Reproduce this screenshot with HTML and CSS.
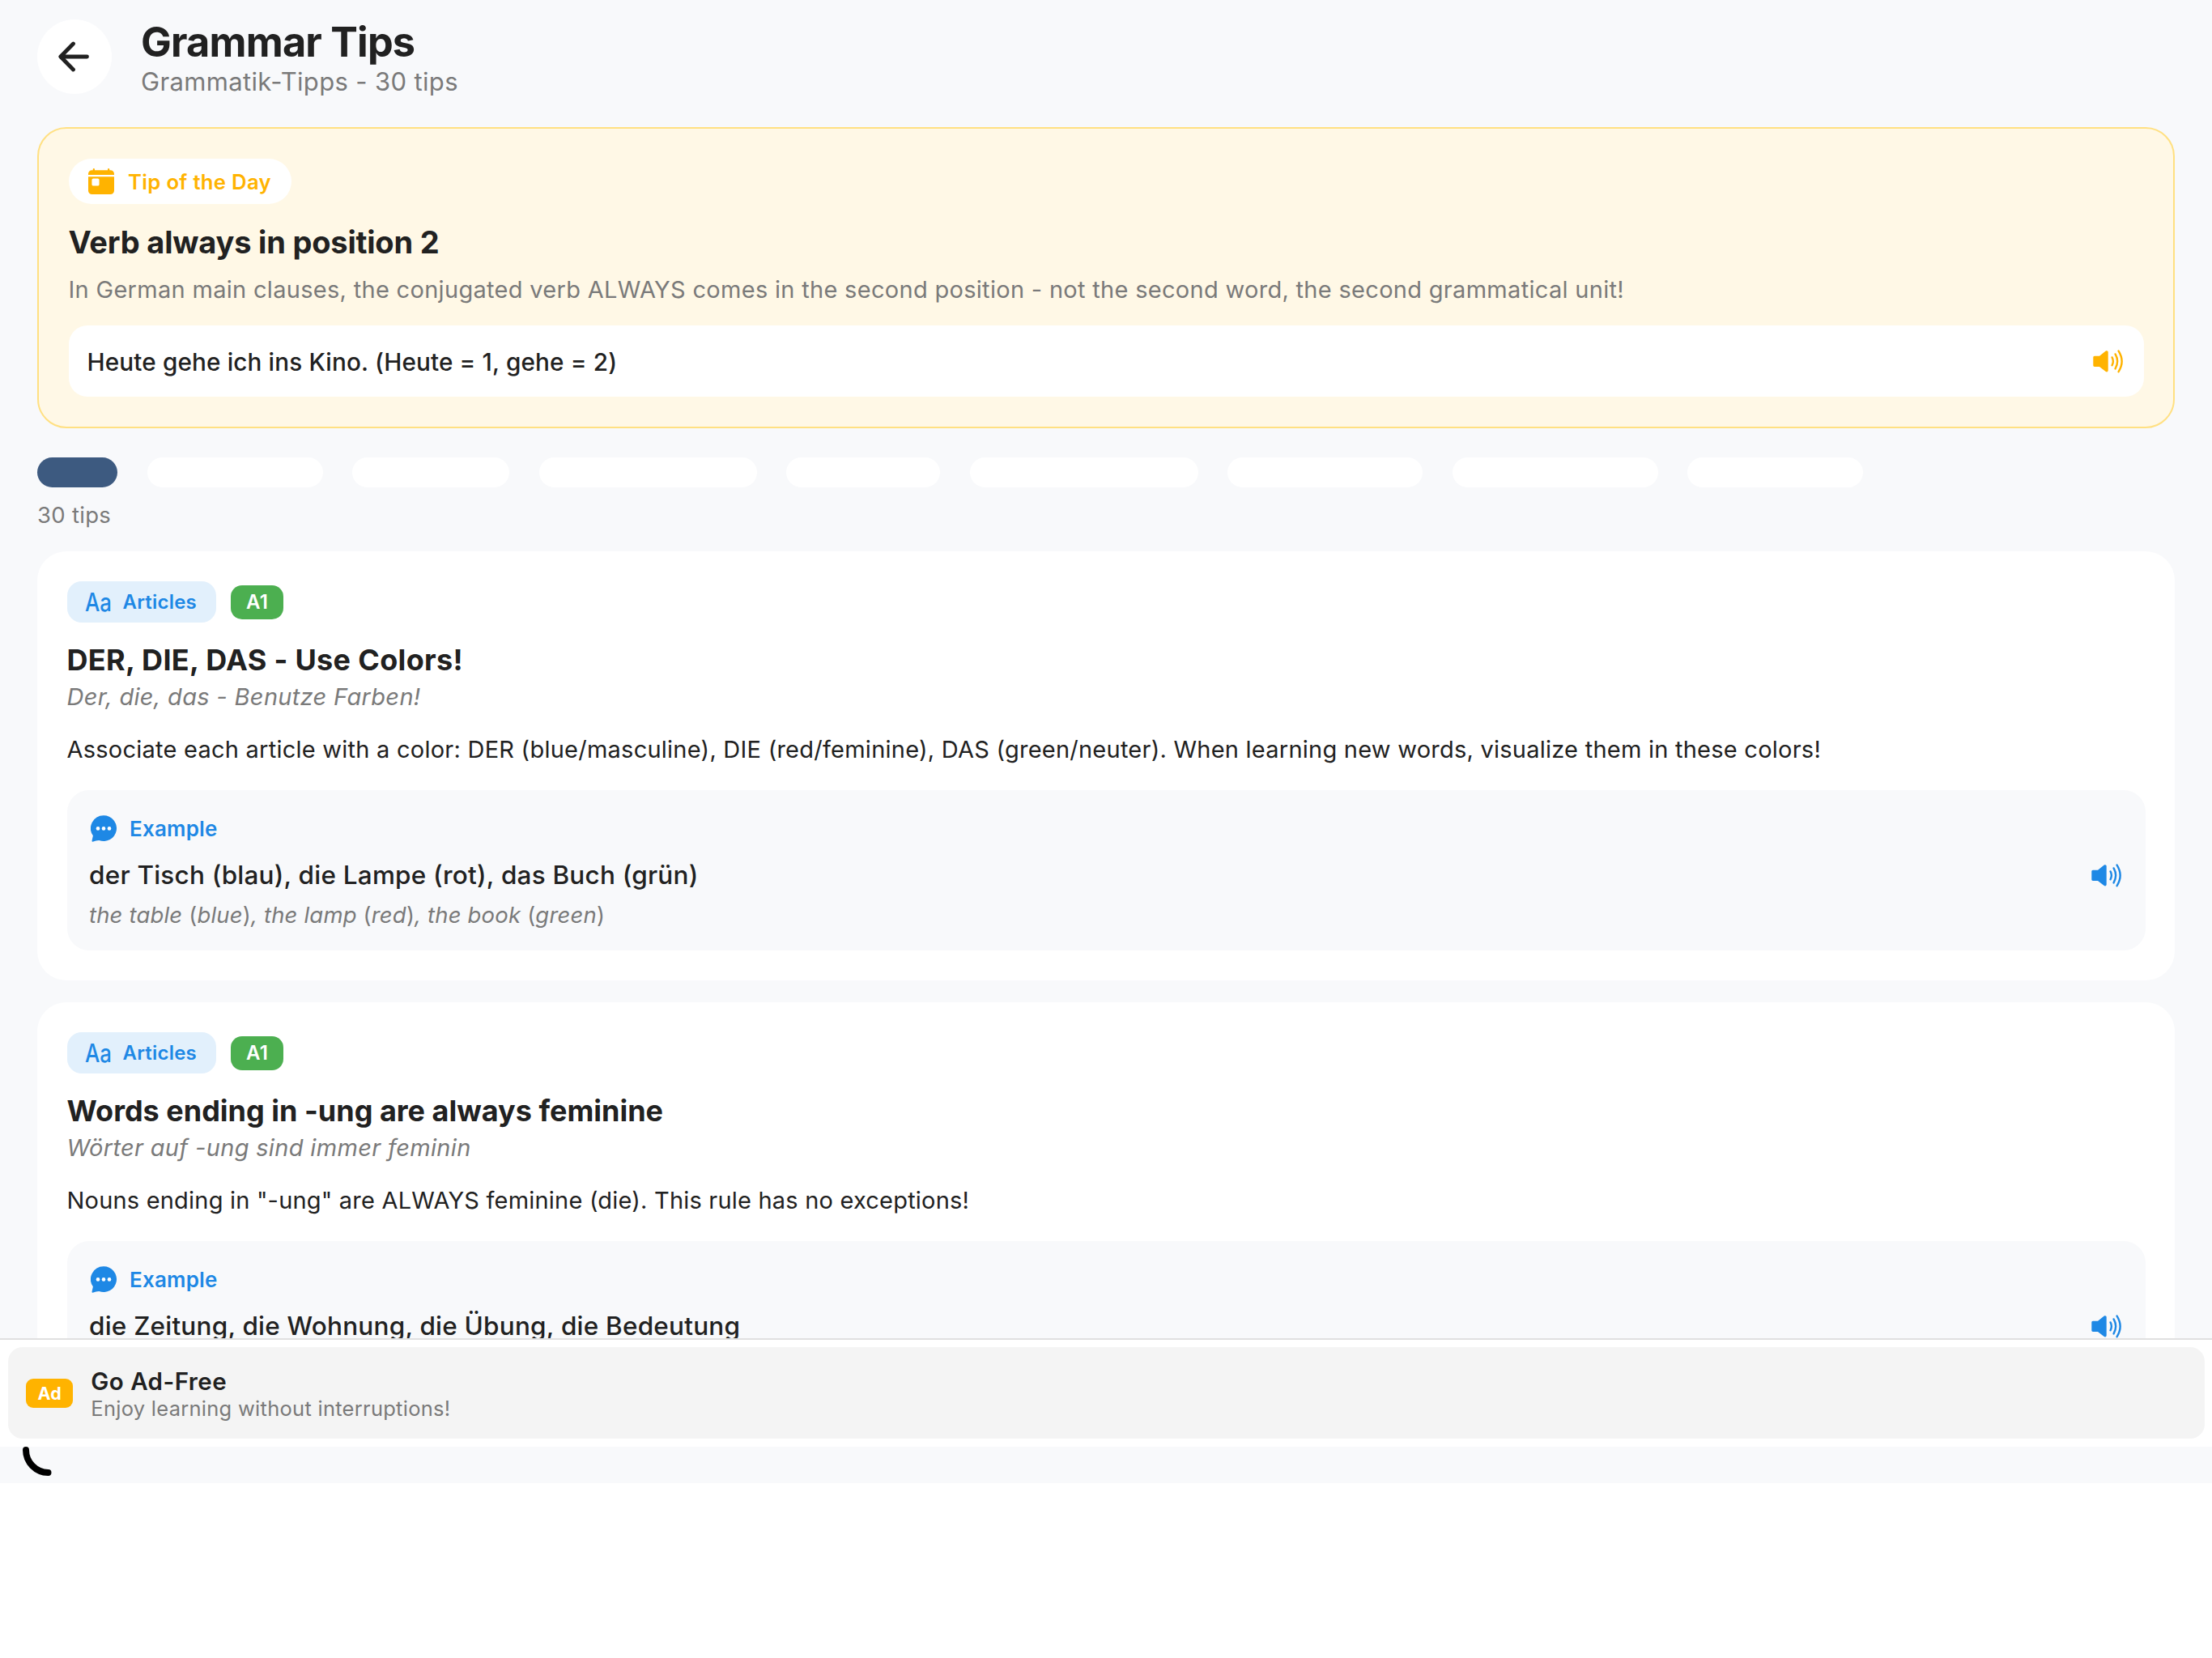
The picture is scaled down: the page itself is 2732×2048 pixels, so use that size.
FILE: index.html
```html
<!DOCTYPE html>
<html lang="en">
<head>
  <meta charset="UTF-8">
  <meta name="viewport" content="width=device-width, initial-scale=1.0">
  <title>Grammar Tips</title>
  <link rel="stylesheet" href="styles.css">
</head>
<body>
  <!-- Shared icons -->
  <svg class="sprite" width="0" height="0" aria-hidden="true">
    <symbol id="speaker" viewBox="0 0 37 29">
      <path fill="currentColor" d="M2 7.8H8L15.8 1.6C17.2 .6 18.7 1.4 18.7 3V25.6C18.7 27.2 17.2 28 15.8 27L8 20.9H2C.9 20.9 .3 20.2 .3 19.2V9.5C.3 8.5 .9 7.8 2 7.8Z"/>
      <path fill="none" stroke="currentColor" stroke-width="2.4" stroke-linecap="round" d="M23.6 9.4Q26.2 14.3 23.6 19.3M27.6 5.4Q32.7 14.3 27.6 23.4M31.6 1.6Q39.7 14.3 31.6 27.2"/>
    </symbol>
    <symbol id="bubble" viewBox="0 0 32 33">
      <path fill="currentColor" d="M16 .3A15.9 15.9 0 1 1 10.3 31C7.6 31 5.5 31.8 3.4 32.6C2 33 1.3 32.3 1.6 31.2L2.9 25.3A15.9 15.9 0 0 1 16 .3Z"/>
      <circle cx="9" cy="16.4" r="2.3" fill="#fff"/>
      <circle cx="16" cy="16.4" r="2.3" fill="#fff"/>
      <circle cx="23" cy="16.4" r="2.3" fill="#fff"/>
    </symbol>
  </svg>

  <div class="app">
    <main class="content">
      <header class="header">
        <button class="back-btn" aria-label="Back">
          <svg width="40" height="38" viewBox="0 0 40 38" fill="none" stroke="currentColor" stroke-width="4.8" stroke-linecap="round" stroke-linejoin="round">
            <path d="M18.500 3L2.800 19L18.500 35M4 19H35.500"/>
          </svg>
        </button>
        <div>
          <h1>Grammar Tips</h1>
          <p class="subtitle">Grammatik-Tipps - 30 tips</p>
        </div>
      </header>

      <section class="daily">
        <div class="daily-badge">
          <svg width="32" height="32" viewBox="32 32 448 448" fill="currentColor">
            <path d="M480 128a64 64 0 0 0-64-64h-16V48a16 16 0 0 0-32 0v16H144V48a16 16 0 0 0-32 0v16H96a64 64 0 0 0-64 64v12a4 4 0 0 0 4 4h440a4 4 0 0 0 4-4z"/>
            <path fill-rule="evenodd" d="M32 416a64 64 0 0 0 64 64h320a64 64 0 0 0 64-64V179a3 3 0 0 0-3-3H35a3 3 0 0 0-3 3zM120 206h76a26 26 0 0 1 26 26v76a26 26 0 0 1-26 26h-76a26 26 0 0 1-26-26v-76a26 26 0 0 1 26-26z"/>
          </svg>
          <span>Tip of the Day</span>
        </div>
        <h2>Verb always in position 2</h2>
        <p class="daily-text">In German main clauses, the conjugated verb ALWAYS comes in the second position - not the second word, the second grammatical unit!</p>
        <div class="daily-example">
          <span>Heute gehe ich ins Kino. (Heute = 1, gehe = 2)</span>
          <svg class="speaker"><use href="#speaker"/></svg>
        </div>
      </section>

      <nav class="filters">
        <div class="filter active" style="width: 99px"></div>
        <div class="filter" style="width: 217px"></div>
        <div class="filter" style="width: 194px"></div>
        <div class="filter" style="width: 269px"></div>
        <div class="filter" style="width: 190px"></div>
        <div class="filter" style="width: 282px"></div>
        <div class="filter" style="width: 241px"></div>
        <div class="filter" style="width: 254px"></div>
        <div class="filter" style="width: 217px"></div>
      </nav>
      <p class="count">30 tips</p>

      <article class="tip">
        <div class="tags">
          <div class="category">
            <svg width="33" height="40" viewBox="0 0 33 40"><text class="aa" x="0" y="31" textLength="33" lengthAdjust="spacingAndGlyphs">Aa</text></svg>
            <span>Articles</span>
          </div>
          <span class="level">A1</span>
        </div>
        <h3 class="wide">DER, DIE, DAS - Use Colors!</h3>
        <p class="german">Der, die, das - Benutze Farben!</p>
        <p class="text">Associate each article with a color: DER (blue/masculine), DIE (red/feminine), DAS (green/neuter). When learning new words, visualize them in these colors!</p>
        <div class="example">
          <div class="example-head">
            <svg width="32" height="33"><use href="#bubble"/></svg>
            <span>Example</span>
          </div>
          <div class="example-row">
            <span>der Tisch (blau), die Lampe (rot), das Buch (grün)</span>
            <svg class="speaker"><use href="#speaker"/></svg>
          </div>
          <p class="translation">the table <b>(</b>blue<b>)</b>, the lamp <b>(</b>red<b>)</b>, the book <b>(</b>green<b>)</b></p>
        </div>
      </article>

      <article class="tip">
        <div class="tags">
          <div class="category">
            <svg width="33" height="40" viewBox="0 0 33 40"><text class="aa" x="0" y="31" textLength="33" lengthAdjust="spacingAndGlyphs">Aa</text></svg>
            <span>Articles</span>
          </div>
          <span class="level">A1</span>
        </div>
        <h3>Words ending in -ung are always feminine</h3>
        <p class="german">Wörter auf -ung sind immer feminin</p>
        <p class="text short">Nouns ending in "-ung" are ALWAYS feminine (die). This rule has no exceptions!</p>
        <div class="example">
          <div class="example-head">
            <svg width="32" height="33"><use href="#bubble"/></svg>
            <span>Example</span>
          </div>
          <div class="example-row">
            <span>die Zeitung, die Wohnung, die Übung, die Bedeutung</span>
            <svg class="speaker"><use href="#speaker"/></svg>
          </div>
        </div>
      </article>
    </main>

    <aside class="ad-bar">
      <div class="ad">
        <span class="ad-badge">Ad</span>
        <div class="ad-copy">
          <p class="ad-title">Go Ad-Free</p>
          <p class="ad-text">Enjoy learning without interruptions!</p>
        </div>
      </div>
    </aside>

    <footer class="bottom">
      <svg width="40" height="40" viewBox="0 0 40 40" fill="none" stroke="#000" stroke-width="8" stroke-linecap="round">
        <path d="M4 4A28 28 0 0 0 31.500 32"/>
      </svg>
    </footer>
  </div>
</body>
</html>
```
FILE: styles.css
```css
:root {
  --bg: #f8f9fb;
  --card: #ffffff;
  --text: #212121;
  --muted: #7a7a7a;
  --amber: #ffb300;
  --blue: #1e88e5;
  --green: #4caf50;
}

* {
  margin: 0;
  padding: 0;
  box-sizing: border-box;
}

body {
  background: #fff;
  color: var(--text);
  font-family: Inter, "Liberation Sans", sans-serif;
}

svg {
  display: block;
  flex-shrink: 0;
}

.sprite {
  display: none;
}

.app {
  height: 1832px;
  display: flex;
  flex-direction: column;
  background: var(--bg);
}

.content {
  flex: 1;
  min-height: 0;
  overflow: hidden;
  padding: 23px 46px 0;
}

/* Header */
.header {
  display: flex;
  align-items: flex-start;
  gap: 36px;
  height: 134px;
}

.back-btn {
  display: flex;
  align-items: center;
  justify-content: center;
  width: 92px;
  height: 92px;
  margin-top: 1px;
  border: none;
  border-radius: 50%;
  background: var(--card);
  color: var(--text);
}

h1 {
  font-size: 50.4px;
  line-height: 58px;
  letter-spacing: -0.8px;
}

.subtitle {
  font-size: 31px;
  line-height: 40px;
  letter-spacing: 0.35px;
  color: var(--muted);
}

/* Tip of the day */
.daily {
  padding: 37px 36.5px;
  border: 2px solid #ffe082;
  border-radius: 36px;
  background: #fff8e6;
}

.daily-badge {
  display: inline-flex;
  align-items: center;
  gap: 17px;
  height: 56px;
  padding: 0 25px;
  border-radius: 28px;
  background: var(--card);
  color: var(--amber);
  font-size: 25.7px;
  font-weight: 600;
  letter-spacing: 0.3px;
  vertical-align: top;
}

.daily-badge svg {
  margin-left: -0.5px;
}

h2 {
  margin-top: 24px;
  font-size: 38px;
  line-height: 46px;
  letter-spacing: -0.19px;
}

.daily-text {
  margin-top: 13px;
  font-size: 29px;
  line-height: 46px;
  letter-spacing: 0.3px;
  color: var(--muted);
}

.daily-example {
  display: flex;
  align-items: center;
  justify-content: space-between;
  height: 88px;
  margin-top: 21px;
  padding: 0 26px 0 23px;
  border-radius: 23px;
  background: var(--card);
  font-size: 29.7px;
  font-weight: 500;
  letter-spacing: 0.14px;
}

.daily-example span {
  padding-top: 2px;
}

.speaker {
  width: 37px;
  height: 29px;
  color: var(--blue);
}

.daily .speaker {
  color: var(--amber);
}

/* Filters */
.filters {
  display: flex;
  gap: 36.5px;
  margin-top: 36px;
}

.filter {
  height: 37px;
  border-radius: 18.5px;
  background: var(--card);
}

.filter.active {
  background: #3d5a80;
}

.count {
  margin: 17px 0 28px;
  font-size: 27.5px;
  line-height: 34px;
  letter-spacing: 0.3px;
  color: var(--muted);
}

/* Tip cards */
.tip {
  margin-bottom: 27px;
  padding: 37px 36.5px;
  border-radius: 36px;
  background: var(--card);
}

.tags {
  display: flex;
  align-items: center;
  gap: 18.5px;
}

.category {
  display: flex;
  align-items: center;
  gap: 14px;
  height: 51px;
  padding: 0 24px 0 22px;
  border-radius: 18px;
  background: #e2f0fc;
  color: var(--blue);
  font-size: 24px;
  font-weight: 600;
  letter-spacing: 0.2px;
}

.aa {
  font-size: 31px;
  font-weight: 500;
  letter-spacing: 0;
  fill: currentColor;
}

.level {
  padding: 0 18.5px;
  border-radius: 14px;
  background: var(--green);
  color: #fff;
  font-size: 24px;
  font-weight: 600;
  line-height: 42px;
  letter-spacing: 0.4px;
}

h3 {
  margin-top: 24px;
  font-size: 36px;
  line-height: 44px;
}

h3.wide {
  letter-spacing: 0.33px;
}

.german {
  margin-top: 6px;
  font-size: 29px;
  font-style: italic;
  line-height: 36px;
  letter-spacing: 0.33px;
  color: var(--muted);
}

.text {
  margin-top: 23px;
  font-size: 29px;
  line-height: 48px;
  letter-spacing: 0.24px;
}

.text.short {
  letter-spacing: 0.2px;
}

.example {
  height: 198px;
  margin-top: 26px;
  padding: 31px 29.5px 24px 27.5px;
  border-radius: 27px;
  background: var(--bg);
}

.example-head {
  display: flex;
  align-items: center;
  gap: 16.5px;
  padding-left: 1.5px;
  color: var(--blue);
  font-size: 26px;
  font-weight: 600;
  letter-spacing: 0.2px;
}

.example-row {
  display: flex;
  align-items: center;
  justify-content: space-between;
  margin-top: 18px;
  font-size: 31.5px;
  font-weight: 500;
  line-height: 46px;
  letter-spacing: 0.21px;
}

.translation {
  margin-top: 6px;
  font-size: 27.5px;
  font-style: italic;
  line-height: 40px;
  letter-spacing: 0.17px;
  color: var(--muted);
}

/* Brackets stay upright in the italic line */
.translation b {
  font-style: normal;
  font-weight: 400;
}

/* Ad banner */
.ad-bar {
  padding: 9px 9px 10px 10px;
  border-top: 2px solid #e0e0e0;
  background: #fff;
}

.ad {
  display: flex;
  align-items: center;
  gap: 22px;
  height: 113px;
  padding: 0 22px;
  border-radius: 18px;
  background: #f4f4f4;
}

.ad-badge {
  padding: 0 14.5px;
  border-radius: 9px;
  background: var(--amber);
  color: #fff;
  font-size: 21.5px;
  font-weight: 700;
  line-height: 36px;
  letter-spacing: 0.1px;
}

.ad-copy {
  padding-top: 3px;
}

.ad-title {
  font-size: 29.5px;
  font-weight: 600;
  line-height: 34px;
  letter-spacing: 0.45px;
}

.ad-text {
  font-size: 25.5px;
  line-height: 33px;
  letter-spacing: 0.27px;
  color: var(--muted);
}

.bottom {
  height: 45px;
  padding-left: 28px;
}
```
